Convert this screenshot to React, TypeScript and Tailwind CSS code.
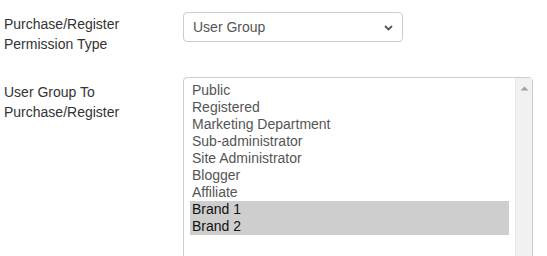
const groups = [
  "Public",
  "Registered",
  "Marketing Department",
  "Sub-administrator",
  "Site Administrator",
  "Blogger",
  "Affiliate",
  "Brand 1",
  "Brand 2",
];

const selected = ["Brand 1", "Brand 2"];

export default function App() {
  return (
    <div className="h-screen overflow-hidden bg-white font-['Liberation_Sans',Arial,sans-serif] text-[14px] leading-[20px] text-[#333]">
      <div className="flex items-start pt-3">
        <label className="w-[183px] shrink-0 pl-1 pt-[2px]">
          Purchase/Register
          <br />
          Permission Type
        </label>
        <div className="flex h-[30px] w-[220px] items-center justify-between rounded-[4px] border border-[#ccc] bg-white pl-[9px] pr-[9px] text-[#555]">
          <span>User Group</span>
          <svg width="9" height="6" viewBox="0 0 9 6" className="mt-[1px]">
            <path d="M1 1 L4.5 4.5 L8 1" fill="none" stroke="#555" strokeWidth="1.8" />
          </svg>
        </div>
      </div>

      <div className="mt-[23px] flex items-start">
        <label className="w-[183px] shrink-0 pl-1 pt-[5px]">
          User Group To
          <br />
          Purchase/Register
        </label>
        <div className="flex h-[190px] w-[350px] rounded-[4px] border border-[#ccc] bg-white">
          <div className="flex-1 px-[6px] pt-[4px]">
            {groups.map((g) => {
              const on = selected.includes(g);
              return (
                <div
                  key={g}
                  className={`h-[17px] px-[2px] leading-[16px] ${on ? "bg-[#cecece] text-[#111]" : "text-[#555]"}`}
                >
                  {g}
                </div>
              );
            })}
          </div>
          <div className="w-[17px] shrink-0 border-l border-[#e8e8e8] bg-[#f1f1f1] pt-[8px]">
            <svg width="17" height="5" viewBox="0 0 17 5">
              <path d="M4.5 4.5 L8.5 0.5 L12.5 4.5 Z" fill="#a3a3a3" />
            </svg>
          </div>
        </div>
      </div>
    </div>
  );
}
